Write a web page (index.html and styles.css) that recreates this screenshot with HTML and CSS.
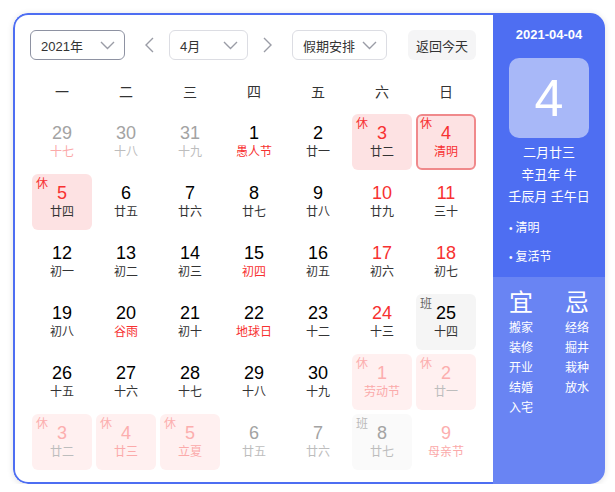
FILE: index.html
```html
<!DOCTYPE html>
<html lang="zh-CN">
<head>
<meta charset="utf-8">
<title>万年历</title>
<link rel="stylesheet" href="styles.css">
</head>
<body>
<div class="cal">
  <div class="main">
    <div class="toolbar">
      <div class="select sel-year dark"><span>2021年</span><svg class="chev" width="15" height="9" viewBox="0 0 15 9"><polyline points="1,1 7.5,7.5 14,1"/></svg></div>
      <div class="arrow prev"><svg width="9" height="16" viewBox="0 0 9 16"><polyline points="8,1 1,8 8,15"/></svg></div>
      <div class="select sel-month"><span>4月</span><svg class="chev" width="15" height="9" viewBox="0 0 15 9"><polyline points="1,1 7.5,7.5 14,1"/></svg></div>
      <div class="arrow next"><svg width="9" height="16" viewBox="0 0 9 16"><polyline points="1,1 8,8 1,15"/></svg></div>
      <div class="select sel-hol"><span>假期安排</span><svg class="chev" width="15" height="9" viewBox="0 0 15 9"><polyline points="1,1 7.5,7.5 14,1"/></svg></div>
      <div class="today-btn">返回今天</div>
    </div>
    <div class="week">
      <div>一</div><div>二</div><div>三</div><div>四</div><div>五</div><div>六</div><div>日</div>
    </div>
    <div class="grid">
      <div class="cell other"><div class="num">29</div><div class="lunar pink">十七</div></div>
      <div class="cell other"><div class="num">30</div><div class="lunar">十八</div></div>
      <div class="cell other"><div class="num">31</div><div class="lunar">十九</div></div>
      <div class="cell"><div class="num">1</div><div class="lunar fest">愚人节</div></div>
      <div class="cell"><div class="num">2</div><div class="lunar">廿一</div></div>
      <div class="cell rest"><span class="tag">休</span><div class="num">3</div><div class="lunar">廿二</div></div>
      <div class="cell rest today"><span class="tag">休</span><div class="num">4</div><div class="lunar fest">清明</div></div>

      <div class="cell rest"><span class="tag">休</span><div class="num">5</div><div class="lunar">廿四</div></div>
      <div class="cell"><div class="num">6</div><div class="lunar">廿五</div></div>
      <div class="cell"><div class="num">7</div><div class="lunar">廿六</div></div>
      <div class="cell"><div class="num">8</div><div class="lunar">廿七</div></div>
      <div class="cell"><div class="num">9</div><div class="lunar">廿八</div></div>
      <div class="cell wkend"><div class="num">10</div><div class="lunar">廿九</div></div>
      <div class="cell wkend"><div class="num">11</div><div class="lunar">三十</div></div>

      <div class="cell"><div class="num">12</div><div class="lunar">初一</div></div>
      <div class="cell"><div class="num">13</div><div class="lunar">初二</div></div>
      <div class="cell"><div class="num">14</div><div class="lunar">初三</div></div>
      <div class="cell"><div class="num">15</div><div class="lunar fest">初四</div></div>
      <div class="cell"><div class="num">16</div><div class="lunar">初五</div></div>
      <div class="cell wkend"><div class="num">17</div><div class="lunar">初六</div></div>
      <div class="cell wkend"><div class="num">18</div><div class="lunar">初七</div></div>

      <div class="cell"><div class="num">19</div><div class="lunar">初八</div></div>
      <div class="cell"><div class="num">20</div><div class="lunar fest">谷雨</div></div>
      <div class="cell"><div class="num">21</div><div class="lunar">初十</div></div>
      <div class="cell"><div class="num">22</div><div class="lunar fest">地球日</div></div>
      <div class="cell"><div class="num">23</div><div class="lunar">十二</div></div>
      <div class="cell wkend"><div class="num">24</div><div class="lunar">十三</div></div>
      <div class="cell work"><span class="tag">班</span><div class="num">25</div><div class="lunar">十四</div></div>

      <div class="cell"><div class="num">26</div><div class="lunar">十五</div></div>
      <div class="cell"><div class="num">27</div><div class="lunar">十六</div></div>
      <div class="cell"><div class="num">28</div><div class="lunar">十七</div></div>
      <div class="cell"><div class="num">29</div><div class="lunar">十八</div></div>
      <div class="cell"><div class="num">30</div><div class="lunar">十九</div></div>
      <div class="cell other rest"><span class="tag">休</span><div class="num">1</div><div class="lunar fest">劳动节</div></div>
      <div class="cell other rest"><span class="tag">休</span><div class="num">2</div><div class="lunar">廿一</div></div>

      <div class="cell other rest"><span class="tag">休</span><div class="num">3</div><div class="lunar">廿二</div></div>
      <div class="cell other rest"><span class="tag">休</span><div class="num">4</div><div class="lunar pink">廿三</div></div>
      <div class="cell other rest"><span class="tag">休</span><div class="num">5</div><div class="lunar fest">立夏</div></div>
      <div class="cell other"><div class="num">6</div><div class="lunar">廿五</div></div>
      <div class="cell other"><div class="num">7</div><div class="lunar">廿六</div></div>
      <div class="cell other work"><span class="tag">班</span><div class="num">8</div><div class="lunar">廿七</div></div>
      <div class="cell other wkend"><div class="num">9</div><div class="lunar fest">母亲节</div></div>
    </div>
  </div>
  <div class="side">
    <div class="side-top">
      <div class="date">2021-04-04</div>
      <div class="big">4</div>
      <div class="info">
        <div>二月廿三</div>
        <div>辛丑年 牛</div>
        <div>壬辰月 壬午日</div>
      </div>
      <ul class="fests">
        <li>清明</li>
        <li>复活节</li>
      </ul>
    </div>
    <div class="side-bottom">
      <div class="col">
        <div class="head">宜</div>
        <div>搬家</div><div>装修</div><div>开业</div><div>结婚</div><div>入宅</div>
      </div>
      <div class="col">
        <div class="head">忌</div>
        <div>经络</div><div>掘井</div><div>栽种</div><div>放水</div>
      </div>
    </div>
  </div>
</div>
</body>
</html>
```
FILE: styles.css
```css
* { box-sizing: border-box; }
body {
  margin: 0;
  background: #fff;
  font-family: "Liberation Sans", "Noto Sans CJK SC", sans-serif;
  color: #333;
}
.cal {
  margin: 13px 0 0 13px;
  width: 592px;
  height: 471px;
  display: flex;
  border-radius: 15px;
  overflow: hidden;
  box-shadow: 0 1px 6px rgba(0, 0, 0, 0.12);
}
.main {
  flex: none;
  width: 480px;
  height: 100%;
  background: #fff;
  border: 2px solid #4e6ef2;
  border-right: none;
  border-radius: 15px 0 0 15px;
  padding: 15px 0 0 15px;
}
.toolbar {
  display: flex;
  align-items: center;
  height: 30px;
}
.select {
  flex: none;
  height: 30px;
  border: 1px solid #dcdde3;
  border-radius: 6px;
  display: flex;
  align-items: center;
  justify-content: space-between;
  padding: 0 9px 0 10px;
  font-size: 13px;
  color: #333;
}
.select.dark { border-color: #8e92a2; }
.sel-year { width: 95px; }
.sel-month { width: 79px; }
.sel-hol { width: 95px; }
.chev polyline, .arrow polyline {
  fill: none;
  stroke: #9a9ca6;
  stroke-width: 1.4;
}
.arrow { flex: none; display: flex; align-items: center; height: 30px; }
.arrow.prev { margin: 0 15px 0 20px; }
.arrow.next { margin: 0 20px 0 15px; }
.today-btn {
  flex: none;
  margin-left: 21px;
  width: 68px;
  height: 30px;
  background: #f5f5f6;
  border-radius: 6px;
  display: flex;
  align-items: center;
  justify-content: center;
  font-size: 13px;
  color: #333;
}
.week {
  margin: 20px 0 10px 2px;
  display: grid;
  grid-template-columns: repeat(7, 60px);
  column-gap: 4px;
  height: 24px;
  font-size: 14px;
  line-height: 24px;
  text-align: center;
  color: #333;
}
.grid {
  margin-left: 2px;
  display: grid;
  grid-template-columns: repeat(7, 60px);
  grid-auto-rows: 56px;
  gap: 4px;
}
.cell {
  position: relative;
  border-radius: 6px;
  text-align: center;
  padding-top: 8px;
}
.num {
  font-size: 18px;
  line-height: 22px;
  color: #000;
}
.lunar {
  font-size: 12px;
  line-height: 16px;
  color: #333;
}
.tag {
  position: absolute;
  left: 4px;
  top: 3px;
  font-size: 12px;
  line-height: 14px;
  color: #f73131;
}
.fest { color: #f73131; }
.wkend .num { color: #f73131; }
.rest { background: #fde2e3; }
.rest .num { color: #f73131; }
.today { border: 2px solid #f0898b; padding-top: 6px; }
.today .tag { left: 2px; top: 1px; }
.work { background: #f5f5f5; }
.work .tag { color: #666; }

.other .num { color: #a3a3a3; }
.other .lunar { color: #bdbdbd; }
.other .lunar.pink, .other .lunar.fest { color: #fbaaaa; }
.other.rest { background: #fff0f0; }
.other.rest .num, .other.rest .tag { color: #fcaeae; }
.other.wkend .num { color: #fcaeae; }
.other.work { background: #fafafa; }
.other.work .tag { color: #bbb; }

.side {
  flex: none;
  width: 112px;
  height: 100%;
  display: flex;
  flex-direction: column;
  color: #fff;
}
.side-top {
  height: 264px;
  background: #4e6ef2;
  padding-top: 14px;
  text-align: center;
}
.date {
  font-size: 13px;
  line-height: 16px;
  font-weight: bold;
}
.big {
  margin: 15px auto 0;
  width: 80px;
  height: 80px;
  border-radius: 10px;
  background: #a8b8f8;
  font-size: 52px;
  line-height: 80px;
  color: #fff;
}
.info {
  margin-top: 4px;
  font-size: 13px;
  line-height: 22px;
}
.fests {
  list-style: none;
  margin: 6px 0 0;
  padding: 0 0 0 16px;
  text-align: left;
  font-size: 12px;
  line-height: 29px;
}
.fests li::before {
  content: "•";
  margin-right: 3px;
  font-size: 10px;
}
.side-bottom {
  flex: 1;
  background: #6984f3;
  display: flex;
  padding: 14px 0 0 16px;
}
.col {
  flex: none;
  width: 56px;
  font-size: 12px;
  line-height: 20px;
}
.col + .col { width: 40px; }
.col .head {
  font-size: 24px;
  line-height: 24px;
  margin-bottom: 3px;
}
```
